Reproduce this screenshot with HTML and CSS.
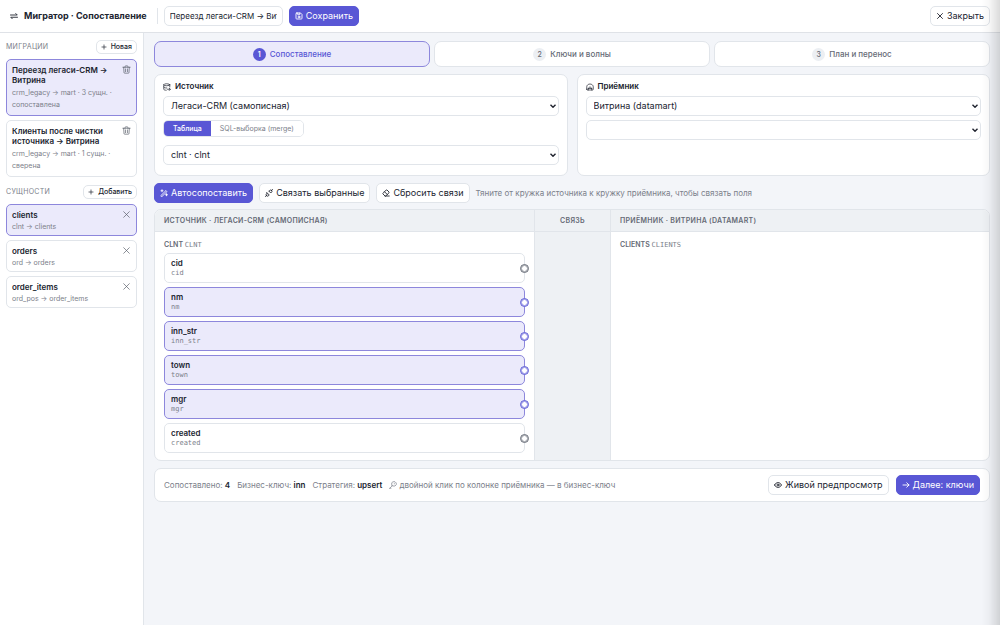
FILE: index.html
```html
<!DOCTYPE html>
<html lang="ru">
<head>
<meta charset="utf-8">
<title>Мигратор · Сопоставление</title>
<meta name="viewport" content="width=device-width, initial-scale=1">
<link rel="stylesheet" href="styles.css">
</head>
<body>
<svg class="defs" aria-hidden="true">
  <symbol id="i-swap" viewBox="0 0 16 16"><path d="M1 6h13.500L11.500 3M15 10.500H1.500l3 3"/></symbol>
  <symbol id="i-save" viewBox="0 0 16 16"><path d="M3.500 2h7.500l3 3v7.500a1.500 1.500 0 0 1-1.500 1.500h-9A1.500 1.500 0 0 1 2 12.500v-9A1.500 1.500 0 0 1 3.500 2zM5.500 2v3.500h4V2"/><circle cx="8" cy="10" r="1.800"/></symbol>
  <symbol id="i-x" viewBox="0 0 16 16"><path d="M3 3l10 10M13 3L3 13"/></symbol>
  <symbol id="i-plus" viewBox="0 0 16 16"><path d="M8 2.500v11M2.500 8h11"/></symbol>
  <symbol id="i-trash" viewBox="0 0 16 16"><path d="M1.500 4h13M5.500 4V2.500a1 1 0 0 1 1-1h3a1 1 0 0 1 1 1V4M3 4l.6 9.500a1 1 0 0 0 1 1h6.800a1 1 0 0 0 1-1L13 4M6.300 7v4.800M9.700 7v4.800"/></symbol>
  <symbol id="i-db" viewBox="0 0 16 16"><ellipse cx="7.500" cy="3.500" rx="6" ry="2"/><path d="M1.500 3.500v9c0 1 2 2 5 2M13.500 3.500V8M1.500 8c0 1.200 2.500 2 6 2M9 12.500h5.500M12.500 10.500l2 2-2 2.500"/></symbol>
  <symbol id="i-store" viewBox="0 0 16 16"><path d="M1.500 12.500V7.500C1.500 4.500 4.500 2 8 2s6.500 2.500 6.500 5.500v5a1.500 1.500 0 0 1-1.500 1.500H3a1.500 1.500 0 0 1-1.500-1.500zM4.500 14v-3.500L8 7.500l3.500 3V14M4.500 11h7"/></symbol>
  <symbol id="i-wand" viewBox="0 0 16 16"><path d="M2 13L12 3l2 2L4 15zM4 1.500v4M2 3.500h4M13 9.500v4M11 11.500h4"/></symbol>
  <symbol id="i-plug" viewBox="0 0 16 16"><path d="M1 15l3-3M4 7.500l4.500 4.500-1.500 1.500c-1.200 1.200-3 1.200-4 0s-1.200-2.800 0-4zM8 4.500L11.500 8 13 6.500c1.300-1.200 1.300-2.800.2-3.800s-2.700-1-3.800.2zM12.500 3.500l2.500-2.500"/></symbol>
  <symbol id="i-eraser" viewBox="0 0 16 16"><path d="M6 14L2 10a1 1 0 0 1 0-1.500L8.500 2A1 1 0 0 1 10 2l4 4a1 1 0 0 1 0 1.500L7.500 14zM5 5.500l5.500 5.500M6 14h8.500"/></symbol>
  <symbol id="i-key" viewBox="0 0 16 16"><path d="M5.500 8V3.500L8 1.500h4L14.500 4v3.500L12 10H7.500zM7 9l-5.500 5.500M1.500 14.500h2.500M10.500 5.500h.5"/></symbol>
  <symbol id="i-eye" viewBox="0 0 16 16"><path d="M1 8c3.500-6.500 10.500-6.500 14 0-3.500 6.500-10.500 6.500-14 0z"/><circle cx="8" cy="8" r="2"/></symbol>
  <symbol id="i-arrow" viewBox="0 0 16 16"><path d="M2 8h12M9.500 3.500L14 8l-4.500 4.500"/></symbol>
  <symbol id="i-down" viewBox="0 0 16 16"><path d="M3 5.500l5 5 5-5"/></symbol>
</svg>

<header class="topbar">
  <h1 class="brand"><svg class="icon"><use href="#i-swap"/></svg>Мигратор · Сопоставление</h1>
  <span class="divider"></span>
  <input class="field name" type="text" aria-label="Название миграции" value="Переезд легаси-CRM → Витрина">
  <button class="btn primary" type="button"><svg class="icon"><use href="#i-save"/></svg>Сохранить</button>
  <button class="btn push" type="button"><svg class="icon"><use href="#i-x"/></svg>Закрыть</button>
</header>

<div class="shell">
  <aside class="side">
    <div class="side-head"><h2>Миграции</h2><button class="btn small" type="button"><svg class="icon"><use href="#i-plus"/></svg>Новая</button></div>
    <ul class="list">
      <li class="item active">
        <div class="item-top"><strong>Переезд легаси-CRM → Витрина</strong><button class="bare" type="button" aria-label="Удалить"><svg class="icon"><use href="#i-trash"/></svg></button></div>
        <p class="meta">crm_legacy → mart · 3 сущн. · сопоставлена</p>
      </li>
      <li class="item">
        <div class="item-top"><strong>Клиенты после чистки источника → Витрина</strong><button class="bare" type="button" aria-label="Удалить"><svg class="icon"><use href="#i-trash"/></svg></button></div>
        <p class="meta">crm_legacy → mart · 1 сущн. · сверена</p>
      </li>
    </ul>
    <div class="side-head"><h2>Сущности</h2><button class="btn small" type="button"><svg class="icon"><use href="#i-plus"/></svg>Добавить</button></div>
    <ul class="list compact">
      <li class="item active">
        <div class="item-top"><strong>clients</strong><button class="bare" type="button" aria-label="Убрать clients"><svg class="icon"><use href="#i-x"/></svg></button></div>
        <p class="meta">clnt → clients</p>
      </li>
      <li class="item">
        <div class="item-top"><strong>orders</strong><button class="bare" type="button" aria-label="Убрать orders"><svg class="icon"><use href="#i-x"/></svg></button></div>
        <p class="meta">ord → orders</p>
      </li>
      <li class="item">
        <div class="item-top"><strong>order_items</strong><button class="bare" type="button" aria-label="Убрать order_items"><svg class="icon"><use href="#i-x"/></svg></button></div>
        <p class="meta">ord_pos → order_items</p>
      </li>
    </ul>
  </aside>

  <main class="main">
    <nav class="steps">
      <button class="step active" type="button"><span class="num">1</span>Сопоставление</button>
      <button class="step" type="button"><span class="num">2</span>Ключи и волны</button>
      <button class="step" type="button"><span class="num">3</span>План и перенос</button>
    </nav>

    <div class="pair">
      <section class="card">
        <label class="card-title" for="src"><svg class="icon"><use href="#i-db"/></svg>Источник</label>
        <div class="select"><select class="field" id="src"><option>Легаси-CRM (самописная)</option></select><svg class="icon"><use href="#i-down"/></svg></div>
        <div class="segments">
          <button class="seg on" type="button">Таблица</button><button class="seg" type="button">SQL-выборка (merge)</button>
        </div>
        <div class="select"><select class="field" aria-label="Таблица источника"><option>clnt · clnt</option></select><svg class="icon"><use href="#i-down"/></svg></div>
      </section>
      <section class="card">
        <label class="card-title" for="dst"><svg class="icon"><use href="#i-store"/></svg>Приёмник</label>
        <div class="select"><select class="field" id="dst"><option>Витрина (datamart)</option></select><svg class="icon"><use href="#i-down"/></svg></div>
        <div class="select"><select class="field" aria-label="Таблица приёмника"><option></option></select><svg class="icon"><use href="#i-down"/></svg></div>
      </section>
    </div>

    <div class="tools">
      <button class="btn primary" type="button"><svg class="icon"><use href="#i-wand"/></svg>Автосопоставить</button>
      <button class="btn" type="button"><svg class="icon"><use href="#i-plug"/></svg>Связать выбранные</button>
      <button class="btn" type="button"><svg class="icon"><use href="#i-eraser"/></svg>Сбросить связи</button>
      <p class="hint">Тяните от кружка источника к кружку приёмника, чтобы связать поля</p>
    </div>

    <section class="board">
      <div class="col">
        <h3 class="col-head">Источник · Легаси-CRM (самописная)</h3>
        <div class="col-body">
          <h4 class="table-name">clnt <code>clnt</code></h4>
          <ul class="rows">
            <li class="row"><b>cid</b><code>cid</code><i class="port"></i></li>
            <li class="row linked"><b>nm</b><code>nm</code><i class="port"></i></li>
            <li class="row linked"><b>inn_str</b><code>inn_str</code><i class="port"></i></li>
            <li class="row linked"><b>town</b><code>town</code><i class="port"></i></li>
            <li class="row linked"><b>mgr</b><code>mgr</code><i class="port"></i></li>
            <li class="row"><b>created</b><code>created</code><i class="port"></i></li>
          </ul>
        </div>
      </div>
      <div class="col link"><h3 class="col-head">Связь</h3></div>
      <div class="col">
        <h3 class="col-head">Приёмник · Витрина (datamart)</h3>
        <div class="col-body"><h4 class="table-name">clients <code>clients</code></h4></div>
      </div>
    </section>

    <footer class="summary">
      <span>Сопоставлено: <b>4</b></span>
      <span>Бизнес-ключ: <b>inn</b></span>
      <span>Стратегия: <b>upsert</b></span>
      <span class="tip"><svg class="icon"><use href="#i-key"/></svg>двойной клик по колонке приёмника — в бизнес-ключ</span>
      <button class="btn push" type="button"><svg class="icon"><use href="#i-eye"/></svg>Живой предпросмотр</button>
      <button class="btn primary" type="button"><svg class="icon"><use href="#i-arrow"/></svg>Далее: ключи</button>
    </footer>
  </main>
</div>
<div class="edge-shade"></div>
</body>
</html>
```

FILE: styles.css
```css
:root {
  --accent: #5957d5;
  --accent-line: #8d87dc;
  --accent-soft: #ebeafb;
  --line: #e1e5ea;
  --text: #20242f;
  --muted: #7b808a;
  --page: #f3f5f9;
}
* { box-sizing: border-box; }
body {
  margin: 0;
  min-height: 100vh;
  display: flex;
  flex-direction: column;
  background: var(--page);
  color: var(--text);
  font: 9px/12px Inter, "Liberation Sans", sans-serif;
}
h1, h2, h3, h4, p, ul { margin: 0; padding: 0; }
ul { list-style: none; }
button, input, select { font: inherit; color: inherit; margin: 0; }
code { font-family: "DejaVu Sans Mono", "Liberation Mono", monospace; font-weight: 400; }
.defs { position: absolute; width: 0; height: 0; }
.icon {
  width: 8px;
  height: 8px;
  flex: none;
  fill: none;
  stroke: currentColor;
  stroke-width: 1.8;
  stroke-linecap: round;
  stroke-linejoin: round;
}

.topbar {
  display: flex;
  align-items: center;
  gap: 6px;
  height: 33px;
  padding: 0 10px;
  background: #fff;
  border-bottom: 1px solid #dfe2e7;
}
.brand {
  display: flex;
  align-items: center;
  gap: 6px;
  padding-right: 4px;
  font-size: 9px;
  font-weight: 700;
  white-space: nowrap;
}
.divider { width: 1px; height: 16px; background: var(--line); }
.push { margin-left: auto; }

.field {
  height: 20px;
  width: 100%;
  border: 1px solid var(--line);
  border-radius: 5px;
  background: #fff;
}
input.field { padding: 0 5px; font-size: 8px; }
.select { position: relative; width: 100%; display: flex; }
.select .field { appearance: none; padding: 0 16px 0 7px; }
.select .icon {
  position: absolute;
  right: 2px;
  top: 6px;
  stroke-width: 2.8;
  stroke-linecap: butt;
  pointer-events: none;
}
.name { width: 119px; }

.btn {
  display: inline-flex;
  align-items: center;
  justify-content: center;
  gap: 3px;
  height: 20px;
  padding: 0 5px;
  border: 1px solid var(--line);
  border-radius: 5px;
  background: #fff;
  white-space: nowrap;
}
.btn.primary { background: var(--accent); border-color: var(--accent); color: #fff; }
.btn.small { gap: 4px; height: 14px; padding: 0 4px; font-size: 7px; font-weight: 500; }
.btn.small .icon { width: 6px; height: 6px; }

.shell { flex: 1; display: flex; }
.side {
  width: 144px;
  flex: none;
  padding: 7px 6px;
  background: #fff;
  border-right: 1px solid var(--line);
}
.side-head {
  display: flex;
  align-items: center;
  justify-content: space-between;
  margin-bottom: 5px;
}
.side-head h2 {
  font-size: 7px;
  font-weight: 400;
  text-transform: uppercase;
  letter-spacing: 0.3px;
  color: var(--muted);
}
.list { display: grid; gap: 4px; margin-bottom: 8px; }
.item { padding: 5px 5px 4px; border: 1px solid var(--line); border-radius: 5px; }
.item.active { background: var(--accent-soft); border-color: var(--accent-line); }
.item-top { display: flex; justify-content: space-between; align-items: flex-start; gap: 4px; }
.item strong { font-size: 8px; line-height: 10px; font-weight: 600; }
.bare { padding: 0; border: 0; background: none; display: flex; color: #555b66; }
.bare .icon { width: 9px; height: 9px; stroke-width: 1.2; }
.meta { margin-top: 2px; font-size: 7px; line-height: 12px; color: var(--muted); }
.compact .item { padding-bottom: 3px; }
.compact .meta { line-height: 10px; }

.main { flex: 1; min-width: 0; padding: 8px 10px; }
.steps { display: grid; grid-template-columns: repeat(3, 1fr); gap: 4px; }
.step {
  display: flex;
  align-items: center;
  justify-content: center;
  gap: 4px;
  height: 26px;
  border: 1px solid var(--line);
  border-radius: 7px;
  background: #fff;
  color: #666b76;
  font-size: 8px;
  font-weight: 500;
}
.step.active { background: var(--accent-soft); border-color: var(--accent-line); color: var(--accent); }
.num {
  width: 13px;
  height: 13px;
  line-height: 13px;
  border-radius: 50%;
  background: #eceff3;
  font-size: 7px;
}
.step.active .num { background: var(--accent); color: #fff; font-weight: 600; }

.pair { display: grid; grid-template-columns: 1fr 1fr; gap: 9px; margin-top: 7px; }
.card {
  display: flex;
  flex-direction: column;
  align-items: flex-start;
  gap: 4px;
  padding: 6px 8px 10px;
  border: 1px solid var(--line);
  border-radius: 7px;
  background: #fff;
}
.card-title { display: flex; align-items: center; gap: 4px; font-size: 8px; font-weight: 600; line-height: 11px; }
.card-title .icon { stroke-width: 1.4; }
.segments {
  display: flex;
  margin-bottom: 4px;
  border: 1px solid var(--line);
  border-radius: 5px;
  overflow: hidden;
}
.seg { height: 15px; padding: 0 9px; border: 0; background: #fff; color: var(--muted); font-size: 7px; }
.seg.on { background: var(--accent); color: #fff; font-weight: 500; }

.tools { display: flex; align-items: center; gap: 6px; margin: 7px 0 6px; }
.hint { font-size: 8px; color: var(--muted); }

.board {
  display: grid;
  grid-template-columns: 1fr 76px 1fr;
  border: 1px solid var(--line);
  border-radius: 7px;
  background: #fff;
  overflow: hidden;
}
.col + .col { border-left: 1px solid var(--line); }
.col.link { background: #eef1f4; text-align: center; }
.col-head {
  height: 22px;
  line-height: 21px;
  padding: 0 9px;
  border-bottom: 1px solid var(--line);
  background: #eef1f4;
  color: #666b76;
  font-size: 7px;
  font-weight: 600;
  letter-spacing: 0.3px;
  text-transform: uppercase;
}
.col-body { padding: 7px 9px; }
.table-name {
  font-size: 7px;
  font-weight: 600;
  line-height: 11px;
  color: #666b76;
  text-transform: uppercase;
}
.table-name code { color: var(--muted); }
.rows { display: grid; gap: 4px; margin-top: 2px; }
.row {
  position: relative;
  display: flex;
  flex-direction: column;
  height: 30px;
  padding: 4px 6px;
  border: 1px solid var(--line);
  border-radius: 5px;
}
.row b { font-size: 8px; font-weight: 600; line-height: 10px; }
.row code { font-size: 7px; line-height: 10px; color: var(--muted); }
.row.linked { background: var(--accent-soft); border-color: var(--accent-line); }
.port {
  position: absolute;
  right: -5px;
  top: 10px;
  width: 9px;
  height: 9px;
  border: 1px solid #666b76;
  outline: 1px solid #666b7699;
  outline-offset: -2px;
  border-radius: 50%;
  background: #fff;
}
.linked .port { border-color: var(--accent); outline-color: #5957d599; }

.summary {
  display: flex;
  align-items: center;
  gap: 7px;
  margin-top: 7px;
  padding: 6px 9px;
  border: 1px solid var(--line);
  border-radius: 7px;
  background: #fff;
  color: var(--muted);
  font-size: 8px;
}
.summary b { color: var(--text); font-weight: 600; }
.summary .btn { font-size: 9px; }
.summary .btn:not(.primary) { color: var(--text); }
.tip { display: flex; align-items: center; gap: 2px; }
.tip .icon { stroke-width: 1.4; }

.edge-shade {
  position: fixed;
  top: 0;
  right: 0;
  bottom: 0;
  width: 18px;
  background: linear-gradient(to right, #0000, #00000008 40%, #00000024);
  pointer-events: none;
}
```
